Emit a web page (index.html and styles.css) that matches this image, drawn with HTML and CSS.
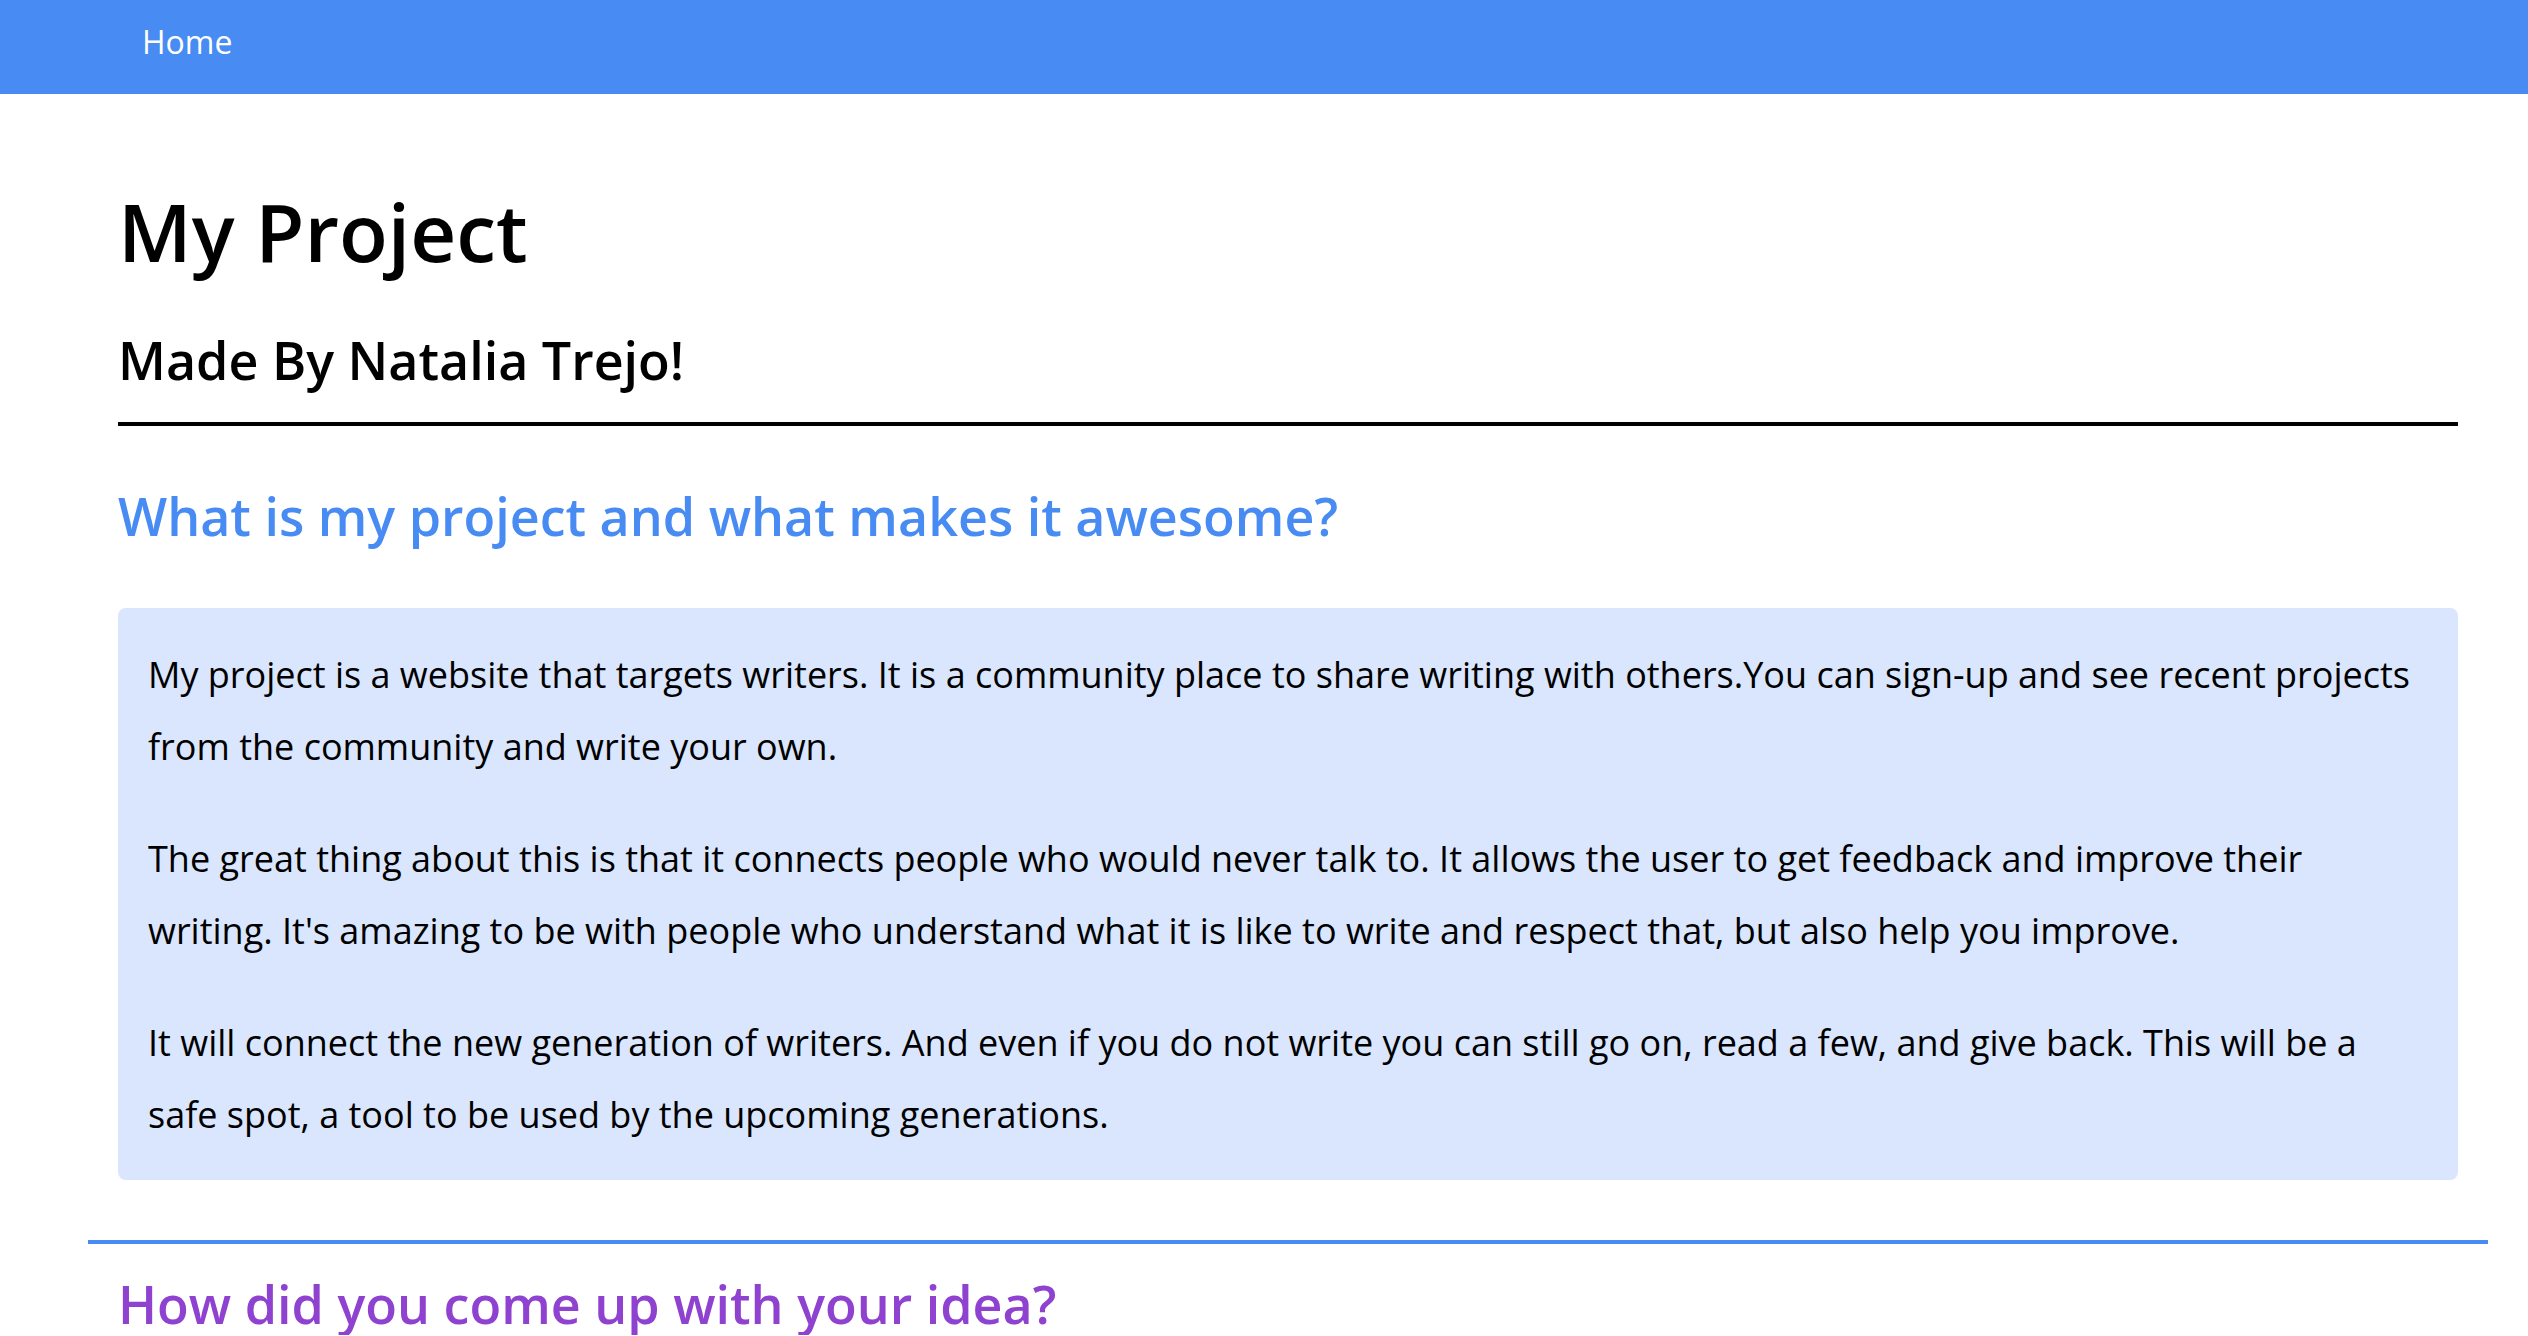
FILE: index.html
```html
<!DOCTYPE html>
<html lang="en">
<head>
<meta charset="utf-8">
<title>My Project</title>
<link rel="stylesheet" href="styles.css">
</head>
<body>
<nav class="navbar">
  <a class="nav-link" href="#">Home</a>
</nav>
<main class="page">
  <header class="intro">
    <h1 class="title">My Project</h1>
    <h2 class="subtitle">Made By Natalia Trejo!</h2>
  </header>
  <section class="section">
    <h3 class="question question-blue">What is my project and what makes it awesome?</h3>
    <div class="answer">
      <p>My project is a website that targets writers. It is a community place to share writing with others.You can sign-up and see recent projects from the community and write your own.</p>
      <p>The great thing about this is that it connects people who would never talk to. It allows the user to get feedback and improve their writing. It's amazing to be with people who understand what it is like to write and respect that, but also help you improve.</p>
      <p>It will connect the new generation of writers. And even if you do not write you can still go on, read a few, and give back. This will be a safe spot, a tool to be used by the upcoming generations.</p>
    </div>
  </section>
  <hr class="divider">
  <section class="section">
    <h3 class="question question-purple">How did you come up with your idea?</h3>
  </section>
</main>
</body>
</html>
```

FILE: styles.css
```css
html, body {
  margin: 0;
  padding: 0;
  background: #ffffff;
}

body {
  font-family: "Open Sans", "Noto Sans", "Liberation Sans", sans-serif;
  color: #000000;
  overflow: hidden;
}

.navbar {
  background: #478bf3;
  height: 94px;
  box-sizing: border-box;
  padding: 20px 0 0 142px;
}

.nav-link {
  color: #ffffff;
  text-decoration: none;
  font-size: 32px;
  line-height: 44px;
  font-weight: 400;
}

.page {
  width: 2400px;
  margin-left: 88px;
}

.intro {
  margin: 0 30px;
  padding-top: 89px;
  padding-bottom: 31px;
  border-bottom: 4px solid #000000;
}

.title {
  margin: 0;
  font-size: 80px;
  line-height: 96px;
  font-weight: 600;
}

.subtitle {
  margin: 50px 0 0 0;
  font-size: 52px;
  line-height: 62px;
  font-weight: 600;
}

.section {
  padding: 0 30px;
}

.question {
  margin: 0;
  font-size: 52px;
  line-height: 62px;
  font-weight: 600;
}

.question-blue {
  color: #478bf3;
  padding-top: 59px;
}

.question-purple {
  color: #8e42cf;
  padding-top: 29px;
}

.answer {
  margin-top: 61px;
  background: #d9e6fd;
  border-radius: 8px;
  padding: 31px 30px 29px;
  display: flex;
  flex-direction: column;
  gap: 40px;
}

.answer p {
  margin: 0;
  font-size: 36px;
  line-height: 72px;
}

.divider {
  margin: 60px 0 0 0;
  border: 0;
  height: 4px;
  background: #478bf3;
}
```
